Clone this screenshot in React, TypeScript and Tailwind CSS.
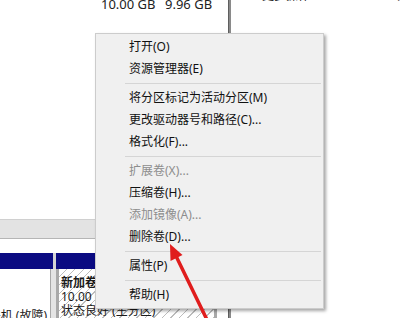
import React from "react";

type Item = { label: string; disabled?: boolean } | "sep";

const items: Item[] = [
  { label: "打开(O)" },
  { label: "资源管理器(E)" },
  "sep",
  { label: "将分区标记为活动分区(M)" },
  { label: "更改驱动器号和路径(C)..." },
  { label: "格式化(F)..." },
  "sep",
  { label: "扩展卷(X)...", disabled: true },
  { label: "压缩卷(H)..." },
  { label: "添加镜像(A)...", disabled: true },
  { label: "删除卷(D)..." },
  "sep",
  { label: "属性(P)" },
  "sep",
  { label: "帮助(H)" },
];

export default function App() {
  return (
    <div
      className="relative w-[409px] h-[318px] overflow-hidden bg-white text-[#1a1a1a]"
      style={{ fontFamily: '"Noto Sans", "Noto Sans CJK SC", sans-serif' }}
    >
      <div className="flex h-full">
        {/* left panel */}
        <div className="w-[228px] flex flex-col shrink-0">
          <div className="h-[222px] flex flex-col">
            <div className="flex -mt-[4px] pl-[101px] text-[13px] leading-[16px] text-[#222]">
              <span className="w-[64px]">10.00 GB</span>
              <span>9.96 GB</span>
            </div>
          </div>
          <div className="h-[20px] bg-[#e3e3e3] border-t border-[#d0d0d0]" />
          <div className="h-px bg-[#b5b5b5]" />
          <div className="h-[14px] bg-white" />
          <div className="h-[16px] flex">
            <div className="w-[53px] bg-[#0b0b82]" />
            <div className="w-[3px] bg-[#d4d4d4]" />
            <div className="flex-1 bg-[#0b0b82]" />
          </div>
          <div className="flex flex-1">
            <div className="w-[51px] bg-white border-r border-[#a8a8a8] flex flex-col justify-end overflow-hidden">
              <div className="whitespace-nowrap text-[12px] leading-[14px] flex justify-end pr-[3px] -mb-[5px]">
                联机 (故障)
              </div>
            </div>
            <div className="w-[5px] bg-[#e4e4e4]" />
            <div className="w-[161px] border-l-[3px] border-r-[3px] border-[#a9a9a9] bg-[repeating-linear-gradient(135deg,#ffffff_0px,#ffffff_5px,#bdbdbd_5px,#bdbdbd_6px)] flex flex-col pl-[2px] pt-[7px] text-[12px] leading-[14px] whitespace-nowrap overflow-hidden">
              <span className="font-bold">新加卷</span>
              <span>10.00 GB NTFS</span>
              <span>状态良好 (主分区)</span>
            </div>
            <div className="flex-1 bg-white" />
          </div>
        </div>
        {/* divider */}
        <div className="w-[3px] shrink-0 bg-[#8a8a8a] border-l border-[#5e5e5e]" />
        {/* right panel */}
        <div className="flex-1 flex">
          <div className="flex-1 pl-[31px] -mt-[11px] text-[12px] leading-[14px]">更多操作</div>
          <div className="pr-[3px] -mt-[9px] text-[9px] leading-[12px]">▶</div>
        </div>
      </div>

      {/* context menu */}
      <div className="absolute left-[95px] top-[33px] w-[229px] bg-[#f0f0f0] border border-[#cccccc] shadow-[2px_2px_3px_rgba(0,0,0,0.35)] pt-[2px] pb-[2px] text-[12px]">
        {items.map((it, i) =>
          it === "sep" ? (
            <div key={i} className="h-[7px] flex items-center">
              <div className="ml-[29px] mr-[2px] flex-1 h-px bg-[#d5d5d5]" />
            </div>
          ) : (
            <div
              key={i}
              className={
                "h-[22px] flex items-center pl-[33px] whitespace-nowrap " +
                (it.disabled ? "text-[#8d8d8d]" : "text-[#111111]")
              }
            >
              {it.label}
            </div>
          )
        )}
      </div>

      {/* red arrow */}
      <svg className="absolute left-0 top-0 pointer-events-none" width="409" height="318" viewBox="0 0 409 318">
        <line x1="211" y1="328" x2="176" y2="256" stroke="#e01d1d" strokeWidth="3.5" strokeLinecap="round" />
        <polygon points="170,244 182.5,255 170.5,261" fill="#e01d1d" />
      </svg>
    </div>
  );
}
